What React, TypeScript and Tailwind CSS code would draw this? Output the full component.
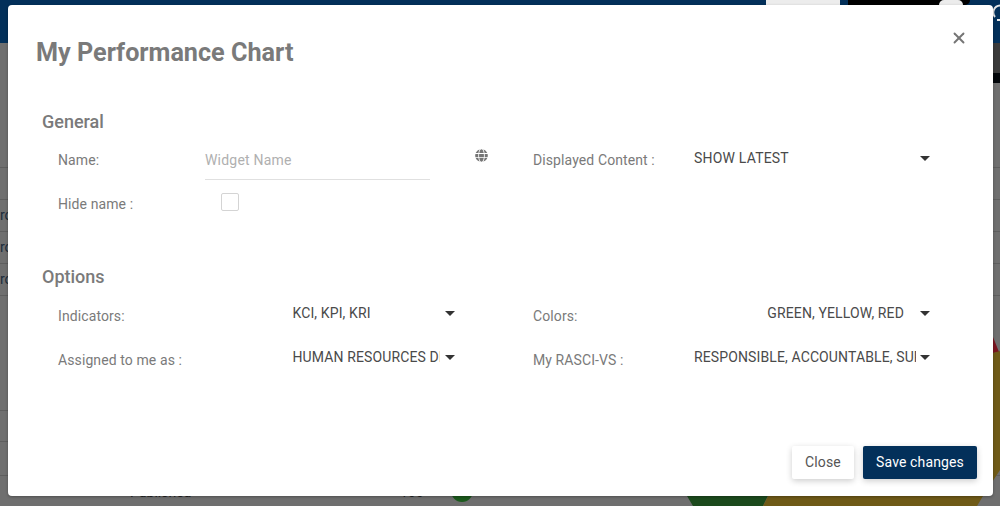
import { X } from 'lucide-react'
import { FaGlobe } from 'react-icons/fa'

function Caret({ className = '' }: { className?: string }) {
  return <span className={`h-0 w-0 border-x-[5px] border-t-[5px] border-x-transparent border-t-[#333] ${className}`} />
}

function Label({ children, className = '' }: { children: string; className?: string }) {
  return <span className={`text-[14px] leading-5 tracking-[0.1px] text-[#7a7a7a] ${className}`}>{children}</span>
}

function Select({ value, width, gap, right = false }: { value: string; width: string; gap: string; right?: boolean }) {
  return (
    <div className="flex items-center">
      <span className={`${width} overflow-hidden whitespace-nowrap text-[14px] leading-5 tracking-[0.12px] text-[#4a4a4a] ${right ? 'text-right' : ''}`}>
        {value}
      </span>
      <Caret className={gap} />
    </div>
  )
}

function BackgroundRow({ text, height = 'h-[32px]' }: { text?: string; height?: string }) {
  return (
    <div className={`flex ${height} items-center border-b border-[#5e5e5e] text-[14px] text-[#1c2c3c]`}>
      {text}
    </div>
  )
}

export default function App() {
  return (
    <div className="relative h-[506px] w-[1000px] overflow-hidden bg-[#6f6f6f] font-['Roboto',sans-serif]">
      {/* page behind the dialog */}
      <header className="flex h-[43px] items-start bg-[#03305a]">
        <div className="ml-[766px] h-[5px] w-[74px] bg-[#ececec]" />
        <div className="ml-[8px] flex h-[5px] w-[122px] justify-end rounded-br-[6px] bg-black pr-[7px]">
          <div className="h-[5px] w-[24px] rounded-t-full bg-[#ececec]" />
        </div>
      </header>
      <div className="flex justify-end">
        <div className="h-[30px] w-[7px] bg-[#3a3a3a]" />
      </div>
      <div className="flex justify-end">
        <div className="h-[10px] w-[7px] bg-[#02060a]" />
      </div>
      <div className="mt-[53px]">
        <BackgroundRow />
        <BackgroundRow />
        <BackgroundRow text="ro" />
        <BackgroundRow text="ro" />
        <BackgroundRow text="ro" />
      </div>
      <div className="mt-[83px]">
        <BackgroundRow height="h-[32px]" />
        <BackgroundRow height="h-[31px]" />
        <BackgroundRow height="h-[34px]" />
        <div className="flex h-[31px] items-center pt-[2px] text-[14px] text-[#222]">
          <span className="ml-[130px] w-[270px]">Published</span>
          <span>100</span>
        </div>
      </div>
      <svg className="absolute left-[660px] top-[320px]" width="340" height="186" viewBox="0 0 340 186">
        <path d="M27 176 L108 176 L103 186 L33 186 Z" fill="#1c4a1d" />
        <path d="M108 176 L323 176 L317 186 L103 186 Z" fill="#6f5a17" />
        <path d="M333 17 L339 32 L333 33 Z" fill="#7a1420" />
        <path d="M333 33 L340 31 L340 150 L323 176 L333 160 Z" fill="#6f5a17" />
      </svg>
      <svg className="absolute left-[990px] top-[2px]" width="10" height="22" viewBox="0 0 10 22">
        <path d="M10 3.5 A7 7 0 0 0 5 15 M7 18 L10 18" fill="none" stroke="#e8e8e8" strokeWidth="2" />
      </svg>
      <div className="absolute left-[451px] top-[480px] h-[22px] w-[22px] rounded-full bg-[#1c5a1d]" />

      {/* dialog */}
      <div className="absolute left-[8px] top-[5px] flex h-[491px] w-[985px] flex-col rounded-[4px] bg-white px-[28px] pt-[32px] shadow-[0_1px_3px_rgba(0,0,0,0.3)]">
        <div className="flex items-start justify-between">
          <h1 className="text-[25.2px] font-bold leading-8 text-[#7a7a7a]">My Performance Chart</h1>
          <button className="mr-[-3px] mt-[-8px] text-[#757575]">
            <X size={18} strokeWidth={2.5} />
          </button>
        </div>

        <div className="mt-[41px] pl-[6px]">
          <h2 className="text-[18px] font-medium leading-6 text-[#7a7a7a]">General</h2>
          <div className="mt-[14px] grid grid-cols-[475px_1fr] pl-[16px]">
            <div className="flex items-start">
              <Label className="w-[147px] pt-[2px]">Name:</Label>
              <div className="w-[225px] border-b border-[#e0e0e0] pb-[9px] pt-[2px] text-[14px] leading-5 tracking-[0.2px] text-[#b0b0b0]">
                Widget Name
              </div>
              <FaGlobe className="ml-[45px] mt-[1px] text-[#757575]" size={13} />
            </div>
            <div className="flex items-start">
              <Label className="w-[161px] pt-[2px]">Displayed Content :</Label>
              <div className="flex items-center">
                <span className="w-[226px] text-[14px] leading-5 tracking-[0.2px] text-[#4a4a4a]">SHOW LATEST</span>
                <Caret />
              </div>
            </div>
          </div>
          <div className="mt-[13px] flex items-start pl-[16px]">
            <Label className="w-[163px] pt-[1px]">Hide name :</Label>
            <span className="h-[18px] w-[18px] rounded-[2px] border border-[#d4d4d4]" />
          </div>

          <h2 className="mt-[51px] text-[18px] font-medium leading-6 text-[#7a7a7a]">Options</h2>
          <div className="mt-[14px] grid grid-cols-[475px_1fr] gap-y-[21px] pl-[16px]">
            <div className="flex items-start">
              <Label className="w-[234.5px] pt-[3px]">Indicators:</Label>
              <Select value="KCI, KPI, KRI" width="w-[147px]" gap="ml-[5px]" />
            </div>
            <div className="flex items-start">
              <Label className="w-[161px] pt-[3px]">Colors:</Label>
              <Select value="GREEN, YELLOW, RED" width="w-[210px]" gap="ml-[16px]" right />
            </div>
            <div className="flex items-start">
              <Label className="w-[234.5px] pt-[3px]">Assigned to me as :</Label>
              <Select value="HUMAN RESOURCES DIRECTOR" width="w-[147px]" gap="ml-[5px]" />
            </div>
            <div className="flex items-start">
              <Label className="w-[161px] pt-[3px]">My RASCI-VS :</Label>
              <Select value="RESPONSIBLE, ACCOUNTABLE, SUPPORT" width="w-[222px]" gap="ml-[4px]" />
            </div>
          </div>
        </div>

        <div className="mt-auto mb-[17px] mr-[-12px] flex justify-end gap-[9px]">
          <button className="h-[33px] w-[62px] rounded-[2px] bg-white text-[14px] tracking-[0.12px] text-[#555] shadow-[0_2px_6px_rgba(0,0,0,0.2)]">
            Close
          </button>
          <button className="h-[33px] w-[114px] rounded-[2px] bg-[#03305a] text-[14px] tracking-[0.12px] text-white shadow-[0_2px_6px_rgba(0,0,0,0.2)]">
            Save changes
          </button>
        </div>
      </div>
    </div>
  )
}
